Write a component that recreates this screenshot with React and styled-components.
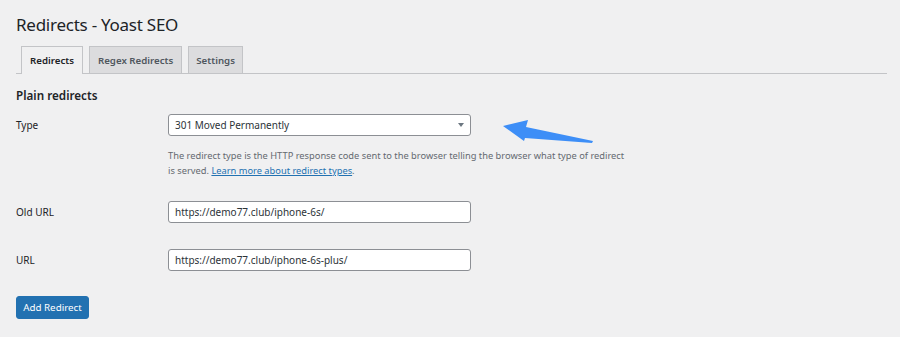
import React from "react";
import styled, { createGlobalStyle } from "styled-components";

const Global = createGlobalStyle`
  html, body { margin: 0; padding: 0; background: #f0f0f1; }
  body { font-family: "Noto Sans", "Open Sans", sans-serif; color: #1d2327; }
`;

const Page = styled.div`
  width: 900px;
  height: 337px;
  box-sizing: border-box;
  padding: 12px 13px 0 16px;
  background: #f0f0f1;
  position: relative;
  overflow: hidden;
`;

const Title = styled.h1`
  margin: 0;
  font-size: 17px;
  font-weight: 400;
  letter-spacing: -0.25px;
  line-height: 25px;
  color: #1d2327;
`;

const TabBar = styled.div`
  display: flex;
  gap: 6px;
  margin-top: 9px;
  padding-left: 5px;
  border-bottom: 1px solid #c3c4c7;
  height: 27px;
  align-items: flex-end;
`;

const Tab = styled.div`
  box-sizing: border-box;
  padding: 0 ${p => p.$pad || 8}px;
  display: flex;
  align-items: center;
  font-size: 9.7px;
  font-weight: 600;
  border: 1px solid #c3c4c7;
  border-bottom: none;
  margin-bottom: ${p => (p.$active ? "-1px" : "0")};
  height: ${p => (p.$active ? "28px" : "27px")};
  background: ${p => (p.$active ? "#f0f0f1" : "#dcdcde")};
  color: ${p => (p.$active ? "#1d2327" : "#50575e")};
`;

const Section = styled.h2`
  margin: 13px 0 0;
  font-size: 11.7px;
  font-weight: 600;
  line-height: 16px;
`;

const Form = styled.div`
  display: flex;
  flex-direction: column;
  margin-top: 11px;
`;

const Row = styled.div`
  display: flex;
  margin-top: ${p => p.$mt || 0}px;
`;

const Label = styled.div`
  width: 152px;
  flex: none;
  font-size: 10px;
  line-height: 22px;
  color: #1d2327;
`;

const Field = styled.div`
  width: 303px;
  display: flex;
  flex-direction: column;
`;

const Box = styled.div`
  box-sizing: border-box;
  height: 22px;
  background: #fff;
  border: 1px solid #8c8f94;
  border-radius: 3px;
  display: flex;
  align-items: center;
  justify-content: space-between;
  padding: 0 6px;
  font-size: 10px;
  color: #2c3338;
`;

const Caret = styled.span`
  width: 0;
  height: 0;
  border-left: 3px solid transparent;
  border-right: 3px solid transparent;
  border-top: 4px solid #6c7781;
`;

const Desc = styled.p`
  margin: 12px 0 0;
  width: 470px;
  font-size: 9.3px;
  line-height: 15px;
  color: #646970;
  white-space: nowrap;
`;

const Link = styled.a`
  color: #2271b1;
  text-decoration: underline;
`;

const Button = styled.button`
  margin-top: 25px;
  height: 23px;
  width: 73px;
  padding: 0;
  background: #2271b1;
  border: 1px solid #2271b1;
  border-radius: 3px;
  color: #fff;
  font-family: inherit;
  font-size: 9.8px;
`;

const Arrow = styled.svg`
  position: absolute;
  left: 500px;
  top: 116px;
`;

export default function App() {
  return (
    <>
      <Global />
      <Page>
        <Title>Redirects - Yoast SEO</Title>
        <TabBar>
          <Tab $active>Redirects</Tab>
          <Tab>Regex Redirects</Tab>
          <Tab $pad={7}>Settings</Tab>
        </TabBar>
        <Section>Plain redirects</Section>
        <Form>
          <Row>
            <Label>Type</Label>
            <Field>
              <Box>
                301 Moved Permanently
                <Caret />
              </Box>
              <Desc>
                The redirect type is the HTTP response code sent to the browser telling the browser what type of redirect
                <br />
                is served. <Link href="#">Learn more about redirect types</Link>.
              </Desc>
            </Field>
          </Row>
          <Row $mt={23}>
            <Label>Old URL</Label>
            <Field>
              <Box>https://demo77.club/iphone-6s/</Box>
            </Field>
          </Row>
          <Row $mt={26}>
            <Label>URL</Label>
            <Field>
              <Box>https://demo77.club/iphone-6s-plus/</Box>
            </Field>
          </Row>
        </Form>
        <Button>Add Redirect</Button>
        <Arrow width="100" height="32" viewBox="500 116 100 32">
          <polygon points="503,126 528,120 526,127 593,141 592,143 525,138 524,141" fill="#3d8ef7" />
        </Arrow>
      </Page>
    </>
  );
}
